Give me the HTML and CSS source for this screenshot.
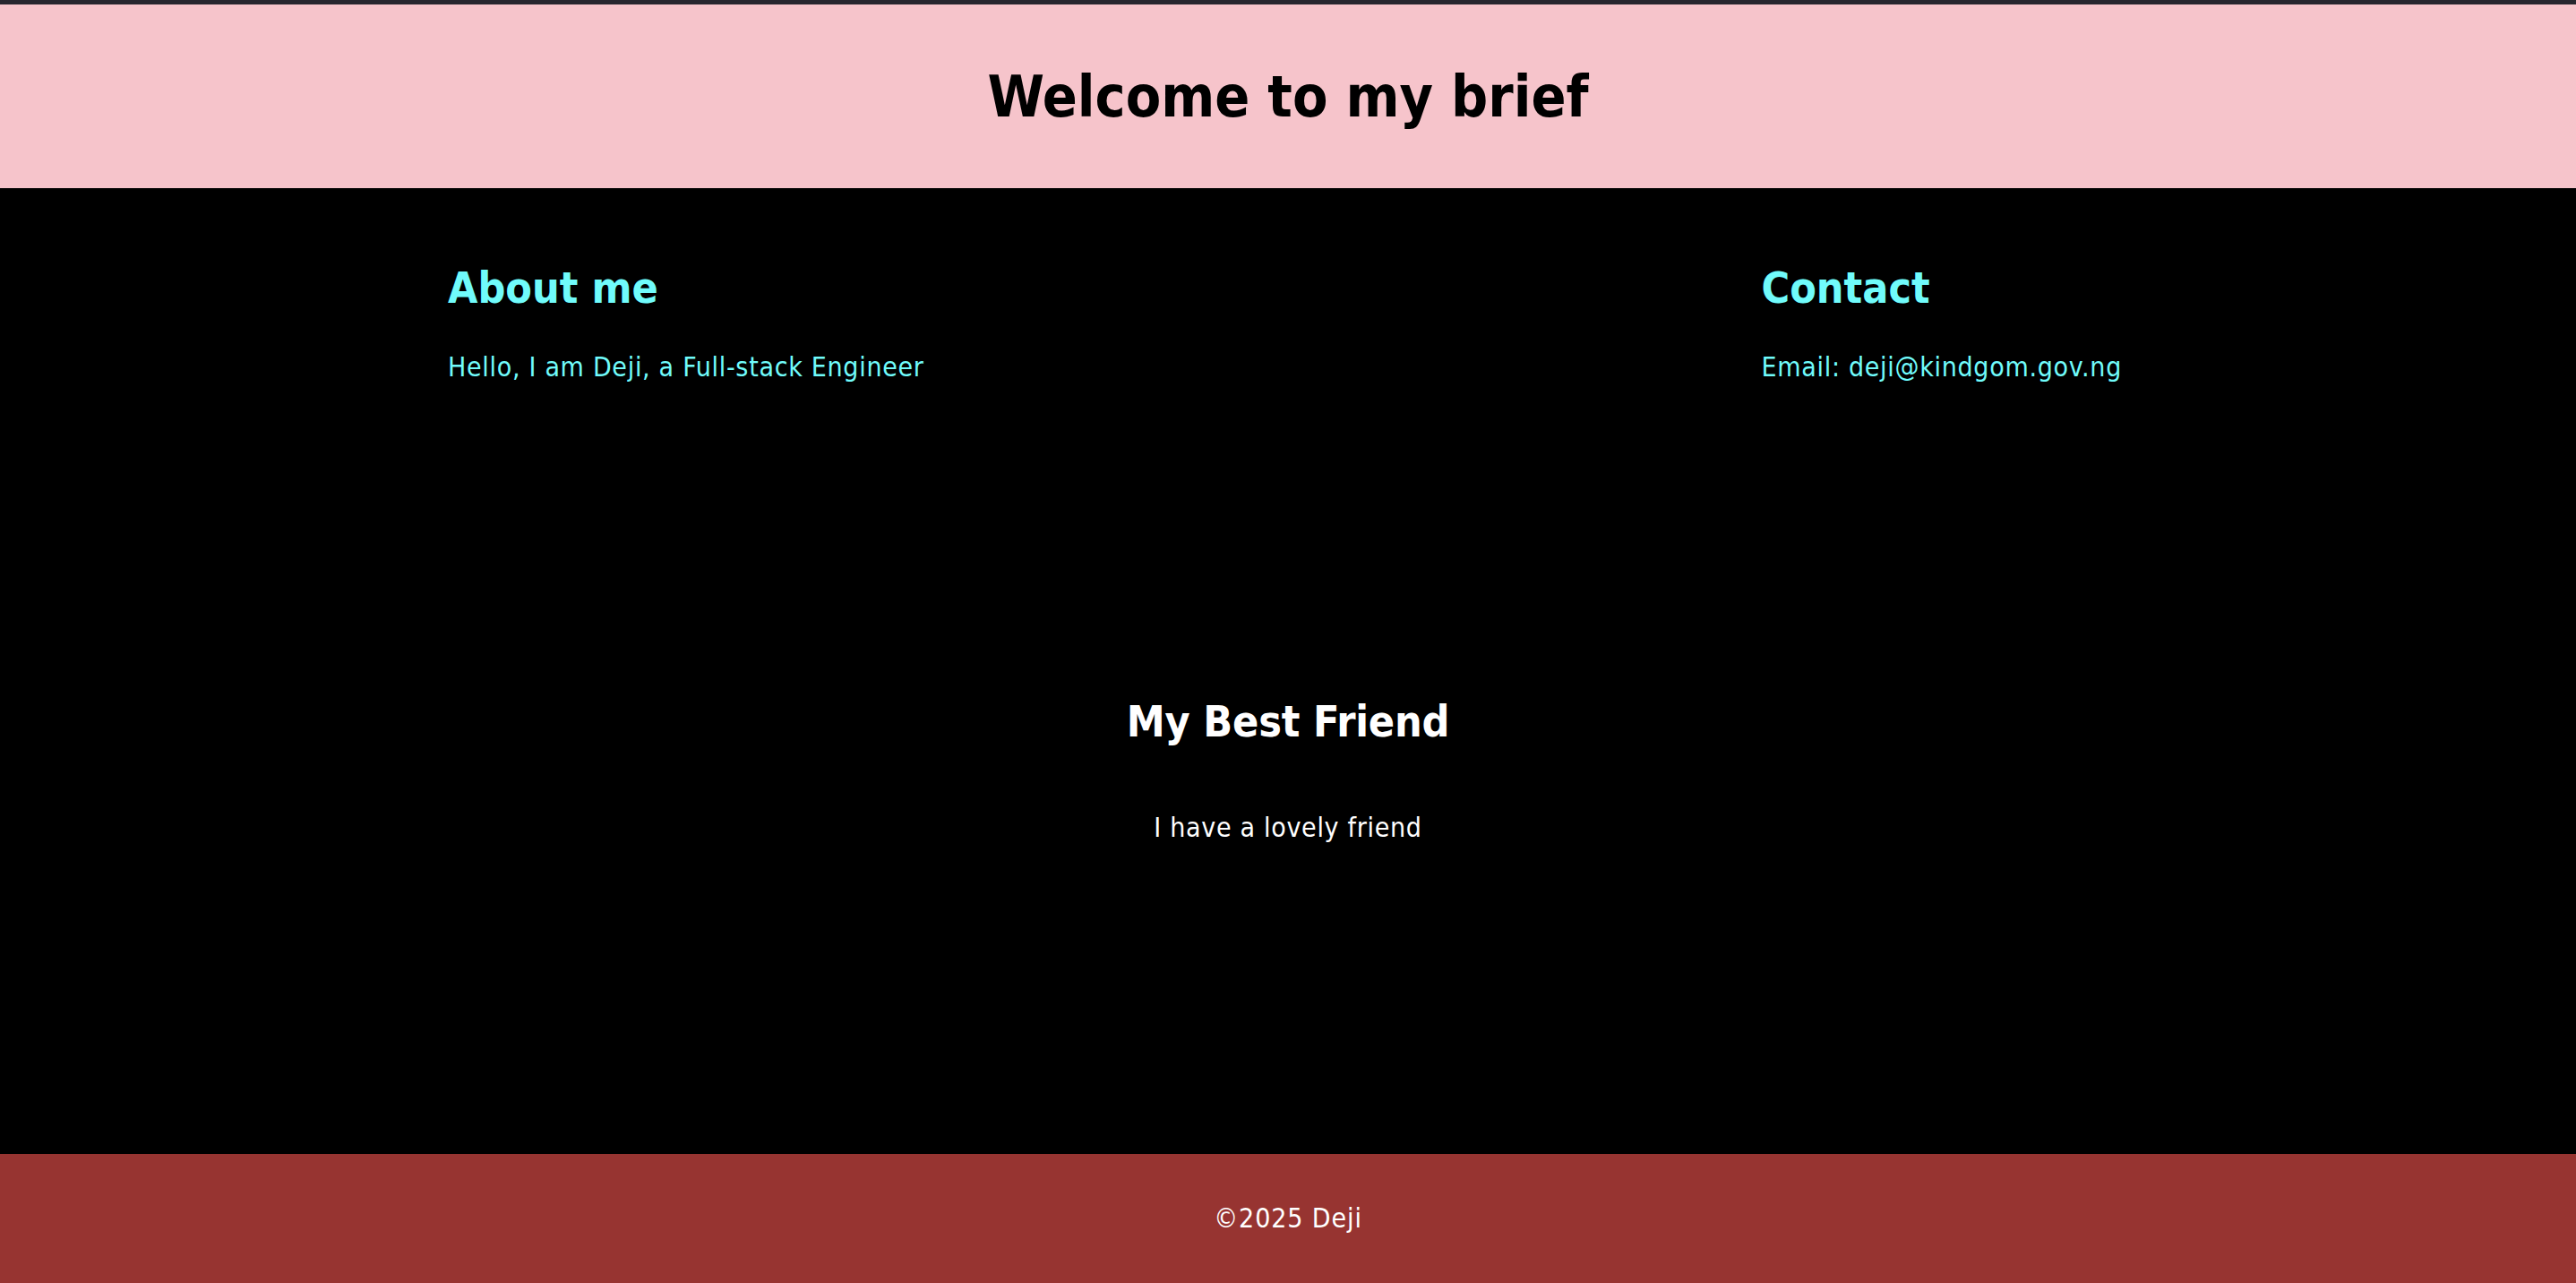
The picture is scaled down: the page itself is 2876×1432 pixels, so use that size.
FILE: index.html
```html
<!DOCTYPE html>
<html lang="en">
<head>
<meta charset="utf-8">
<title>Welcome to my brief</title>
<link rel="stylesheet" href="styles.css">
</head>
<body>
<div class="topbar"></div>
<header class="site-header">
  <h1 class="title">Welcome to my brief</h1>
</header>
<main class="main">
  <section class="intro">
    <div class="card">
      <h2 class="card-title">About me</h2>
      <p class="card-text">Hello, I am Deji, a Full-stack Engineer</p>
    </div>
    <div class="card">
      <h2 class="card-title">Contact</h2>
      <p class="card-text">Email: deji@kindgom.gov.ng</p>
    </div>
  </section>
  <section class="friend">
    <h2 class="friend-title">My Best Friend</h2>
    <p class="friend-text">I have a lovely friend</p>
  </section>
</main>
<footer class="site-footer">
  <p class="footer-text">©2025 Deji</p>
</footer>
</body>
</html>
```
FILE: styles.css
```css
html, body {
  margin: 0;
  padding: 0;
}
body {
  font-family: "DejaVu Sans Condensed", "DejaVu Sans", Verdana, sans-serif;
  font-stretch: condensed;
  background: #000;
  min-height: 100vh;
  display: flex;
  flex-direction: column;
}
.topbar {
  height: 5px;
  background: #27262e;
}
.site-header {
  background: #f6c4cb;
  height: 205px;
  display: flex;
  align-items: center;
  justify-content: center;
}
.title {
  margin: 0;
  font-size: 64px;
  line-height: 78px;
  font-weight: bold;
  color: #000;
}
.main {
  flex: 1;
  background: #000;
  display: flex;
  flex-direction: column;
}
.intro {
  display: flex;
  justify-content: space-between;
  padding: 82px 507px 0 500px;
}
.card-title {
  margin: 0;
  font-size: 48px;
  line-height: 58px;
  font-weight: bold;
  color: #70fbfb;
}
.card-text {
  margin: 42px 0 0;
  font-size: 30px;
  line-height: 36px;
  letter-spacing: 0.7px;
  color: #70fbfb;
}
.friend {
  margin-top: 348px;
  text-align: center;
}
.friend-title {
  margin: 0;
  font-size: 48px;
  line-height: 58px;
  font-weight: bold;
  letter-spacing: -0.2px;
  color: #fff;
}
.friend-text {
  margin: 72px 0 0;
  font-size: 30px;
  line-height: 36px;
  letter-spacing: 0.7px;
  color: #fff;
}
.site-footer {
  background: #973431;
  height: 144px;
  display: flex;
  align-items: center;
  justify-content: center;
}
.footer-text {
  margin: 0;
  font-size: 30px;
  line-height: 36px;
  letter-spacing: 0.9px;
  color: #fff;
}
```
